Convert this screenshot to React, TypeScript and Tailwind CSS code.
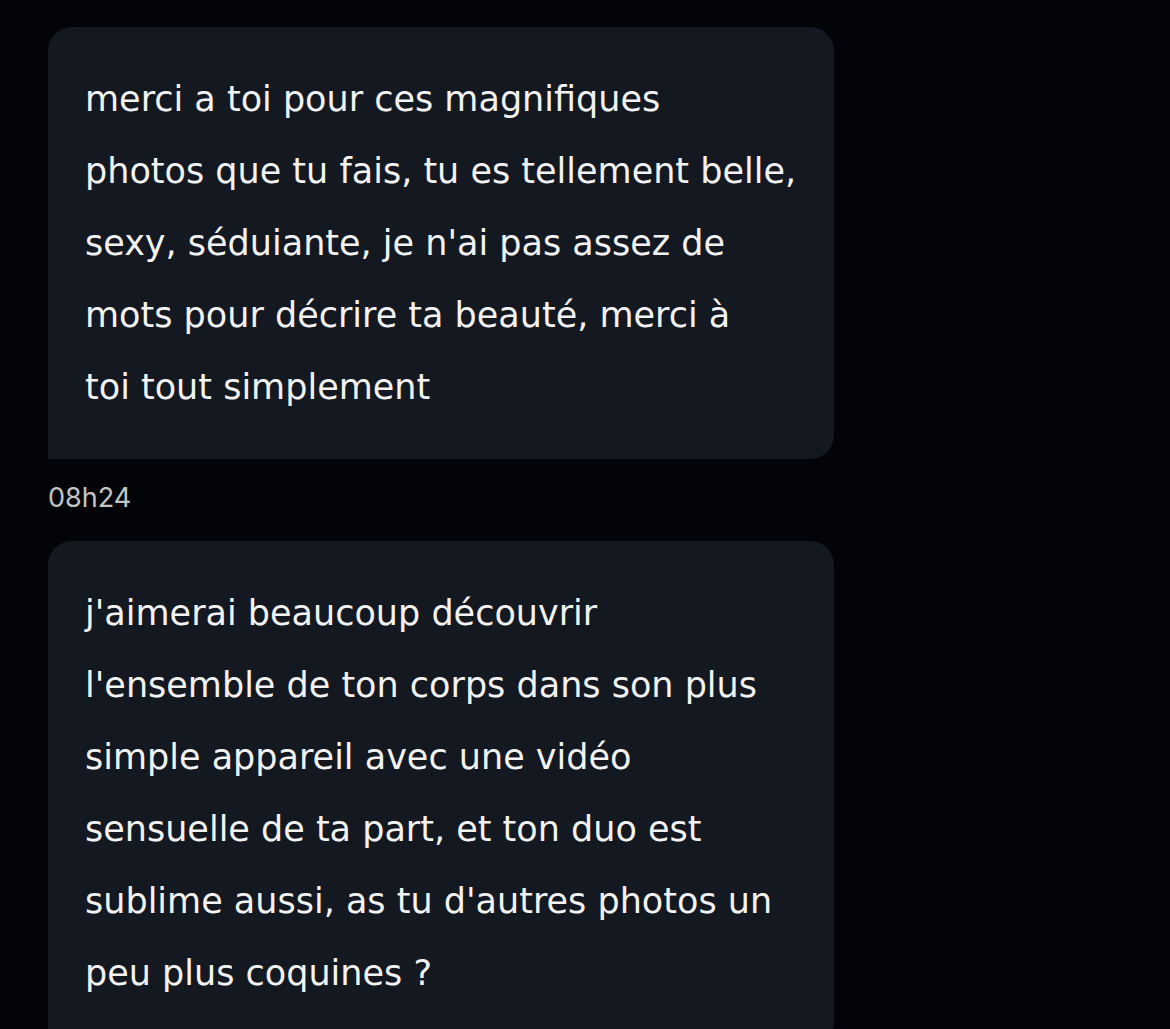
const first = [
  "merci a toi pour ces magnifiques",
  "photos que tu fais, tu es tellement belle,",
  "sexy, séduiante, je n'ai pas assez de",
  "mots pour décrire ta beauté, merci à",
  "toi tout simplement",
];

const second = [
  "j'aimerai beaucoup découvrir",
  "l'ensemble de ton corps dans son plus",
  "simple appareil avec une vidéo",
  "sensuelle de ta part, et ton duo est",
  "sublime aussi, as tu d'autres photos un",
  "peu plus coquines ?",
];

const Bubble = ({ lines }: { lines: string[] }) => (
  <div className="w-[786px] bg-[#141820] rounded-t-[24px] rounded-br-[24px] pl-[37px] pr-6 py-[36px]">
    {lines.map((l, i) => (
      <div key={i} className="leading-[72px] text-[35px] text-[#f2f2f2] whitespace-nowrap font-['DejaVu_Sans',sans-serif]">
        {l}
      </div>
    ))}
  </div>
);

const App = () => {
  return (
    <div className="w-[1170px] h-[1029px] overflow-hidden bg-[#030408] pl-[48px] pt-[27px]">
      <Bubble lines={first} />
      <div className="h-[82px] pb-[4px] flex items-center text-[27px] text-[#c4c4c4] font-['Inter',sans-serif]">08h24</div>
      <Bubble lines={second} />
    </div>
  );
};

export default App;
